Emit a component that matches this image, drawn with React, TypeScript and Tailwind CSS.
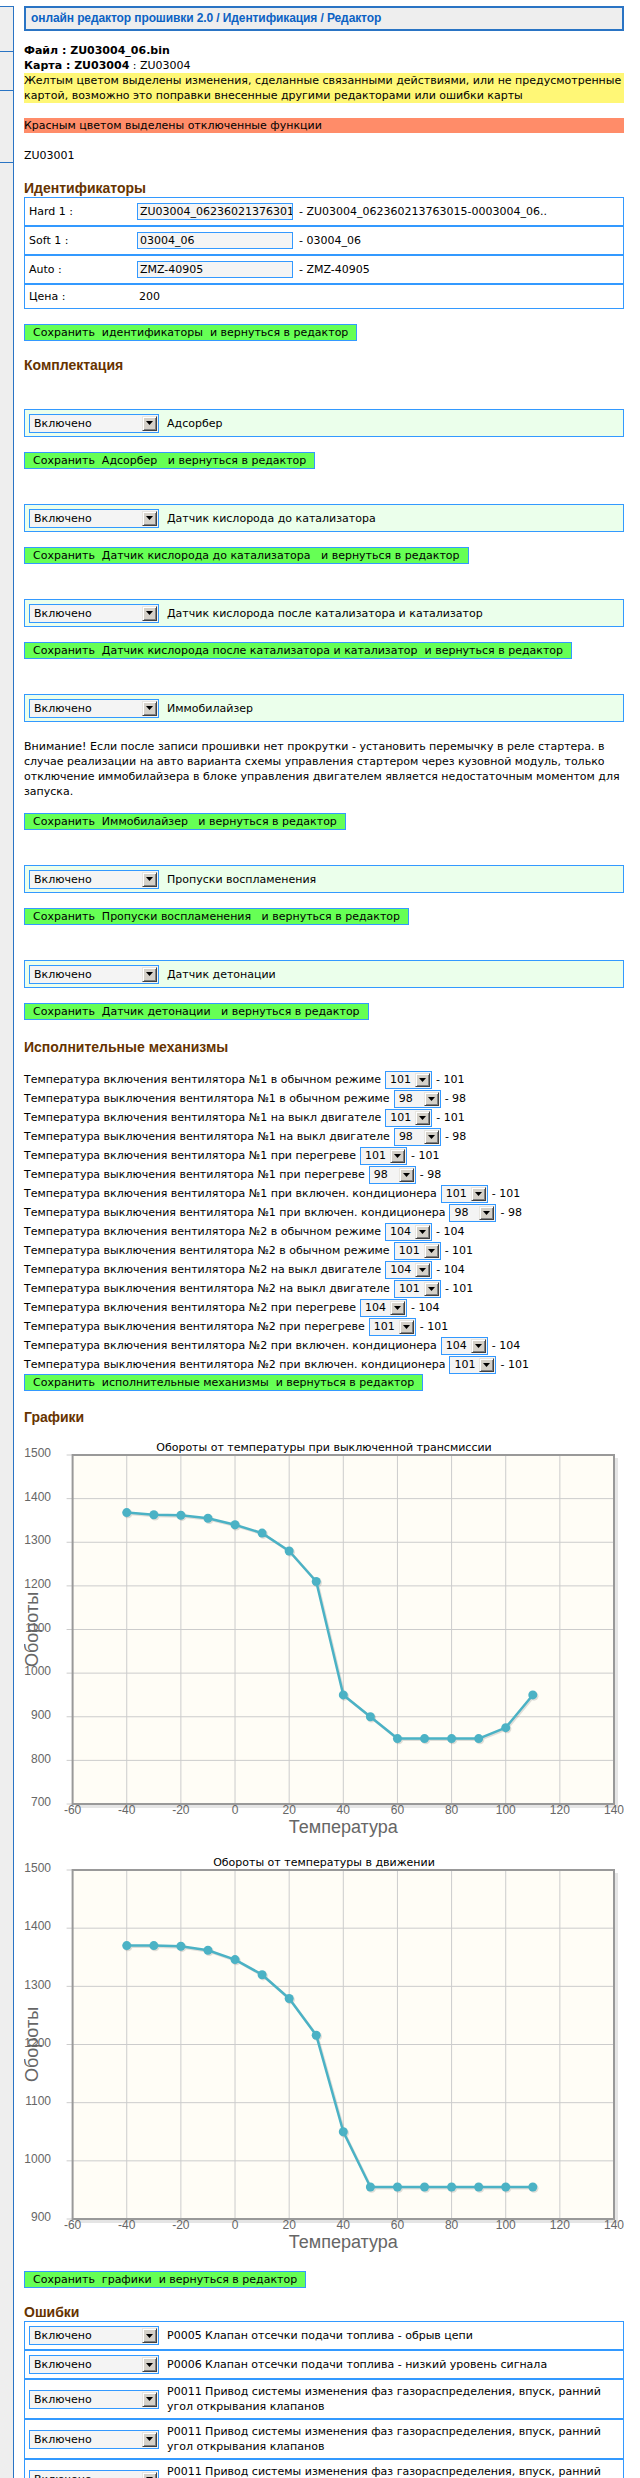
import React from 'react'

const blue = 'border-[#3399ff]'

const Sel = ({ value, className }: { value: string; className: string }) => (
  <div className={`flex shrink-0 items-stretch border ${blue} bg-[#f4f4f4] ${className}`}>
    <span className="flex flex-1 items-center pl-[4px] whitespace-nowrap">{value}</span>
    <span className="m-[1px] flex w-[15px] items-center justify-center border border-t-[#e8e6e1] border-l-[#e8e6e1] border-r-[#404040] border-b-[#404040] bg-[#d4d0c8] shadow-[inset_1px_1px_#ffffff,inset_-1px_-1px_#808080]">
      <svg width="7" height="4" viewBox="0 0 7 4">
        <path d="M0 0h7L3.5 4z" fill="#000" />
      </svg>
    </span>
  </div>
)

const Heading = ({ children, className }: { children: React.ReactNode; className: string }) => (
  <div className={`font-['Liberation_Sans',Arial,sans-serif] text-[14px] font-bold leading-[17px] text-[#663300] ${className}`}>
    {children}
  </div>
)

const SaveBtn = ({ text, className }: { text: string; className: string }) => (
  <div className={`h-[17px] self-start border ${blue} bg-[#66ff55] px-[8px] leading-[15px] whitespace-pre ${className}`}>
    {text}
  </div>
)

const Option = ({ label }: { label: string }) => (
  <div className={`mt-[35px] flex h-[28px] items-center border ${blue} bg-[#ebffeb] px-[4px]`}>
    <Sel value="Включено" className="h-[19px] w-[130px]" />
    <span className="ml-[8px]">{label}</span>
  </div>
)

const fans = [
  ['Температура включения вентилятора №1 в обычном режиме', '101'],
  ['Температура выключения вентилятора №1 в обычном режиме', '98'],
  ['Температура включения вентилятора №1 на выкл двигателе', '101'],
  ['Температура выключения вентилятора №1 на выкл двигателе', '98'],
  ['Температура включения вентилятора №1 при перегреве', '101'],
  ['Температура выключения вентилятора №1 при перегреве', '98'],
  ['Температура включения вентилятора №1 при включен. кондиционера', '101'],
  ['Температура выключения вентилятора №1 при включен. кондиционера', '98'],
  ['Температура включения вентилятора №2 в обычном режиме', '104'],
  ['Температура выключения вентилятора №2 в обычном режиме', '101'],
  ['Температура включения вентилятора №2 на выкл двигателе', '104'],
  ['Температура выключения вентилятора №2 на выкл двигателе', '101'],
  ['Температура включения вентилятора №2 при перегреве', '104'],
  ['Температура выключения вентилятора №2 при перегреве', '101'],
  ['Температура включения вентилятора №2 при включен. кондиционера', '104'],
  ['Температура выключения вентилятора №2 при включен. кондиционера', '101'],
]

const errors: string[][] = [
  ['P0005 Клапан отсечки подачи топлива - обрыв цепи'],
  ['P0006 Клапан отсечки подачи топлива - низкий уровень сигнала'],
  ['P0011 Привод системы изменения фаз газораспределения, впуск, ранний', 'угол открывания клапанов'],
  ['P0011 Привод системы изменения фаз газораспределения, впуск, ранний', 'угол открывания клапанов'],
  ['P0011 Привод системы изменения фаз газораспределения, впуск, ранний', 'угол открывания клапанов'],
  ['P0012 Привод системы изменения фаз газораспределения, впуск, поздний', 'угол открывания клапанов'],
]

const temps = [-40, -30, -20, -10, 0, 10, 20, 30, 40, 50, 60, 70, 80, 90, 100, 110]

const Chart = ({ title, yMin, yMax, data, className }: { title: string; yMin: number; yMax: number; data: number[]; className: string }) => {
  const L = 48.6
  const R = 590
  const T = 18
  const B = 367
  const xs = (t: number) => L + ((t + 60) / 200) * (R - L)
  const ys = (v: number) => B - ((v - yMin) / (yMax - yMin)) * (B - T)
  const xTicks = [-60, -40, -20, 0, 20, 40, 60, 80, 100, 120, 140]
  const yTicks: number[] = []
  for (let v = yMin; v <= yMax; v += 100) yTicks.push(v)
  const pts = temps.map((t, i) => `${xs(t)},${ys(data[i])}`).join(' ')
  return (
    <svg width="600" height="405" className={`block shrink-0 ${className}`}>
      <text x="300" y="11" textAnchor="middle" dominantBaseline="middle" fontFamily="DejaVu Sans, Verdana, sans-serif" fontSize="11" fill="#000">
        {title}
      </text>
      <polyline points={`${R + 2.5},${T + 3} ${R + 2.5},${B + 2.5} ${L + 3},${B + 2.5}`} fill="none" stroke="#000" strokeOpacity="0.1" strokeWidth="3" />
      <rect x={L} y={T} width={R - L} height={B - T} fill="#fffdf6" />
      {xTicks.slice(1, -1).map((t) => (
        <line key={t} x1={xs(t)} x2={xs(t)} y1={T} y2={B} stroke="#cccccc" strokeWidth="1" />
      ))}
      {yTicks.slice(1, -1).map((v) => (
        <line key={v} x1={L} x2={R} y1={ys(v)} y2={ys(v)} stroke="#cccccc" strokeWidth="1" />
      ))}
      {yTicks.map((v) => (
        <line key={'t' + v} x1={L - 6} x2={L} y1={ys(v)} y2={ys(v)} stroke="#cccccc" strokeWidth="1" />
      ))}
      <rect x={L} y={T} width={R - L} height={B - T} fill="none" stroke="#999999" strokeWidth="2" />
      {yTicks.map((v) => (
        <text key={'l' + v} x="27" y={ys(v) - 1} textAnchor="end" dominantBaseline="middle" fontFamily="Liberation Sans, Arial, sans-serif" fontSize="12" fill="#666666">
          {v}
        </text>
      ))}
      {xTicks.map((t) => (
        <text key={'x' + t} x={xs(t)} y="374" textAnchor="middle" dominantBaseline="middle" fontFamily="Liberation Sans, Arial, sans-serif" fontSize="12" fill="#666666">
          {t}
        </text>
      ))}
      <g transform="translate(1.2,1.2)" opacity="0.12">
        <polyline points={pts} fill="none" stroke="#000" strokeWidth="2.5" />
        {temps.map((t, i) => (
          <circle key={t} cx={xs(t)} cy={ys(data[i])} r="4.5" fill="#000" />
        ))}
      </g>
      <polyline points={pts} fill="none" stroke="#4bb2c5" strokeWidth="2.5" strokeLinejoin="round" />
      {temps.map((t, i) => (
        <circle key={'c' + t} cx={xs(t)} cy={ys(data[i])} r="4.5" fill="#4bb2c5" />
      ))}
      <text x={(L + R) / 2} y="391" textAnchor="middle" dominantBaseline="middle" fontFamily="Liberation Sans, Arial, sans-serif" fontSize="18" fill="#666666">
        Температура
      </text>
      <text x="9" y={(T + B) / 2} transform={`rotate(-90 9 ${(T + B) / 2})`} textAnchor="middle" dominantBaseline="middle" fontFamily="Liberation Sans, Arial, sans-serif" fontSize="18" fill="#666666">
        Обороты
      </text>
    </svg>
  )
}

export default function App() {
  return (
    <div className="flex h-[2478px] items-start overflow-hidden bg-white font-['DejaVu_Sans',Verdana,sans-serif] text-[11px] leading-[15px] text-black">
      {/* left menu column, cut off */}
      <div className="mt-[6px] w-[14px] shrink-0 self-stretch border-t border-r border-[#2a74c4] bg-[#eeeeee]">
        <div className="h-[45px] border-b border-[#2a74c4]" />
        <div className="h-[39px] border-b border-[#2a74c4]" />
        <div className="h-[72px] border-b border-[#2a74c4]" />
      </div>

      <div className="ml-[10px] flex w-[600px] shrink-0 flex-col pt-[6px] [&>*]:shrink-0">
        <div className="flex h-[25px] items-center border-2 border-[#2a74c4] bg-[#eeeeee] px-[5px] font-['Liberation_Sans',Arial,sans-serif] text-[12px] font-bold tracking-[-0.1px] text-[#0b62c4]">
          онлайн редактор прошивки 2.0 / Идентификация / Редактор
        </div>

        <div className="mt-[12px] font-bold">Файл : ZU03004_06.bin</div>
        <div>
          <b>Карта : ZU03004</b> : ZU03004
        </div>
        <div className="bg-[#fff776]">
          <div className="whitespace-nowrap">Желтым цветом выделены изменения, сделанные связанными действиями, или не предусмотренные</div>
          <div className="whitespace-nowrap">картой, возможно это поправки внесенные другими редакторами или ошибки карты</div>
        </div>
        <div className="mt-[15px] bg-[#ff8c69]">Красным цветом выделены отключенные функции</div>
        <div className="mt-[15px]">ZU03001</div>

        <Heading className="mt-[17px]">Идентификаторы</Heading>
        <div className="flex flex-col">
          {[
            ['Hard 1 :', 'ZU03004_062360213763015-0003004_06', '- ZU03004_062360213763015-0003004_06..'],
            ['Soft 1 :', '03004_06', '- 03004_06'],
            ['Auto :', 'ZMZ-40905', '- ZMZ-40905'],
          ].map(([l, v, r]) => (
            <div key={l} className={`flex h-[29px] items-center border ${blue} px-[4px]`}>
              <span className="w-[108px] shrink-0">{l}</span>
              <div className={`h-[17px] w-[156px] shrink-0 overflow-hidden whitespace-nowrap border ${blue} bg-[#f4f4f4] px-[2px] leading-[15px]`}>{v}</div>
              <span className="ml-[6px] whitespace-nowrap">{r}</span>
            </div>
          ))}
          <div className={`flex h-[25px] items-center border ${blue} px-[4px]`}>
            <span className="w-[110px] shrink-0">Цена :</span>
            <span>200</span>
          </div>
        </div>
        <SaveBtn className="mt-[15px]" text="Сохранить  идентификаторы  и вернуться в редактор" />

        <Heading className="mt-[16px]">Комплектация</Heading>
        <Option label="Адсорбер" />
        <SaveBtn className="mt-[15px]" text="Сохранить  Адсорбер   и вернуться в редактор" />
        <Option label="Датчик кислорода до катализатора" />
        <SaveBtn className="mt-[15px]" text="Сохранить  Датчик кислорода до катализатора   и вернуться в редактор" />
        <Option label="Датчик кислорода после катализатора и катализатор" />
        <SaveBtn className="mt-[15px]" text="Сохранить  Датчик кислорода после катализатора и катализатор  и вернуться в редактор" />
        <Option label="Иммобилайзер" />
        <div className="mt-[17px]">
          <div className="whitespace-nowrap">Внимание! Если после записи прошивки нет прокрутки - установить перемычку в реле стартера. в</div>
          <div className="whitespace-nowrap">случае реализации на авто варианта схемы управления стартером через кузовной модуль, только</div>
          <div className="whitespace-nowrap">отключение иммобилайзера в блоке управления двигателем является недостаточным моментом для</div>
          <div className="whitespace-nowrap">запуска.</div>
        </div>
        <SaveBtn className="mt-[14px]" text="Сохранить  Иммобилайзер   и вернуться в редактор" />
        <Option label="Пропуски воспламенения" />
        <SaveBtn className="mt-[15px]" text="Сохранить  Пропуски воспламенения   и вернуться в редактор" />
        <Option label="Датчик детонации" />
        <SaveBtn className="mt-[15px]" text="Сохранить  Датчик детонации   и вернуться в редактор" />

        <Heading className="mt-[19px]">Исполнительные механизмы</Heading>
        <div className="mt-[14px] flex flex-col">
          {fans.map(([l, v], i) => (
            <div key={i} className="flex h-[19px] items-center gap-[4px] whitespace-nowrap">
              <span>{l}</span>
              <Sel value={v} className="h-[18px] w-[47px]" />
              <span>- {v}</span>
            </div>
          ))}
        </div>
        <SaveBtn className="" text="Сохранить  исполнительные механизмы  и вернуться в редактор" />

        <Heading className="mt-[18px]">Графики</Heading>
        <Chart
          className="mt-[11px]"
          title="Обороты от температуры при выключенной трансмиссии"
          yMin={700}
          yMax={1500}
          data={[1368, 1363, 1362, 1355, 1340, 1321, 1280, 1210, 950, 900, 850, 850, 850, 850, 875, 950]}
        />
        <Chart
          className="mt-[10px]"
          title="Обороты от температуры в движении"
          yMin={900}
          yMax={1500}
          data={[1370, 1370, 1369, 1362, 1346, 1320, 1279, 1216, 1050, 955, 955, 955, 955, 955, 955, 955]}
        />
        <SaveBtn className="mt-[14px]" text="Сохранить  графики  и вернуться в редактор" />

        <Heading className="mt-[16px]">Ошибки</Heading>
        <div className="flex flex-col">
          {errors.map((lines, i) => (
            <div key={i} className={`flex items-center border ${blue} px-[4px] ${lines.length > 1 ? 'h-[40px]' : 'h-[29px]'}`}>
              <Sel value="Включено" className="h-[19px] w-[130px]" />
              <div className="ml-[8px]">
                {lines.map((t, j) => (
                  <div key={j} className="whitespace-nowrap">{t}</div>
                ))}
              </div>
            </div>
          ))}
        </div>
      </div>
    </div>
  )
}
